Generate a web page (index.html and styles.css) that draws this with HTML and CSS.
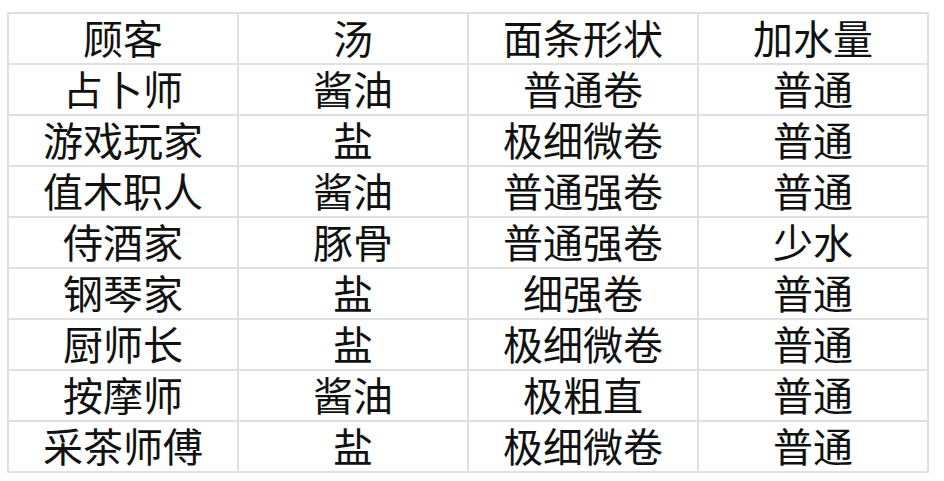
FILE: index.html
```html
<!DOCTYPE html>
<html lang="zh-CN">
<head>
<meta charset="utf-8">
<link rel="stylesheet" href="styles.css">
</head>
<body>
<table class="ramen">
  <colgroup><col class="c"><col class="c"><col class="c"><col class="c"></colgroup>
  <tr><td>顾客</td><td>汤</td><td>面条形状</td><td>加水量</td></tr>
  <tr><td>占卜师</td><td>酱油</td><td>普通卷</td><td>普通</td></tr>
  <tr><td>游戏玩家</td><td>盐</td><td>极细微卷</td><td>普通</td></tr>
  <tr><td>值木职人</td><td>酱油</td><td>普通强卷</td><td>普通</td></tr>
  <tr><td>侍酒家</td><td>豚骨</td><td>普通强卷</td><td>少水</td></tr>
  <tr><td>钢琴家</td><td>盐</td><td>细强卷</td><td>普通</td></tr>
  <tr><td>厨师长</td><td>盐</td><td>极细微卷</td><td>普通</td></tr>
  <tr><td>按摩师</td><td>酱油</td><td>极粗直</td><td>普通</td></tr>
  <tr><td>采茶师傅</td><td>盐</td><td>极细微卷</td><td>普通</td></tr>
</table>
</body>
</html>
```
FILE: styles.css
```css
html, body {
  margin: 0;
  padding: 0;
  background: #ffffff;
}
body {
  padding: 12px 0 0 7px;
  font-family: "Liberation Sans", "Noto Sans CJK SC", sans-serif;
  color: #111;
}
.ramen {
  border-collapse: collapse;
  table-layout: fixed;
  width: 921px;
}
.ramen .c {
  width: 230px;
}
.ramen tr {
  height: 51px;
}
.ramen td {
  border: 2px solid #e0e0e0;
  padding: 3px 0 0 0;
  height: 44px;
  text-align: center;
  vertical-align: middle;
  font-size: 40px;
  line-height: 44px;
  font-weight: 400;
}
```
